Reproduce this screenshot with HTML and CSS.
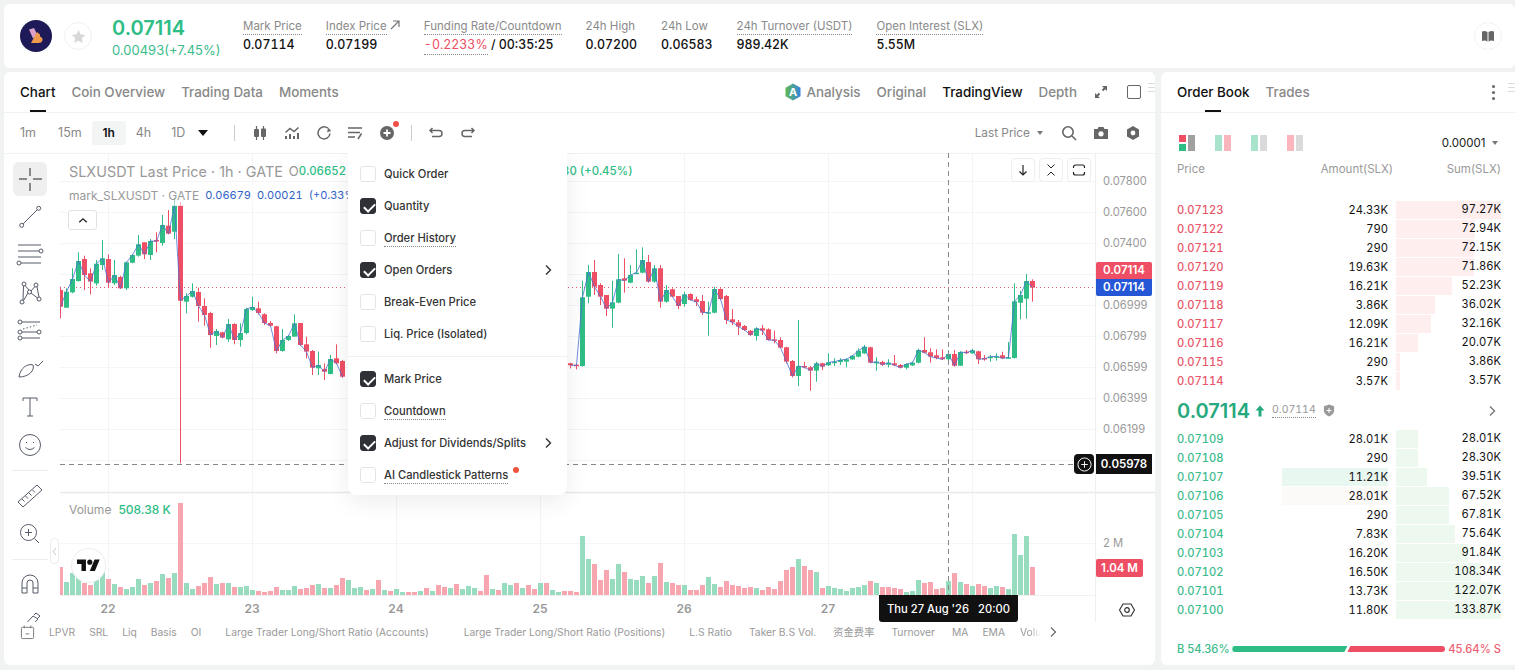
FILE: index.html
```html
<!DOCTYPE html>
<html>

<head>
    <meta charset="utf-8">
    <title>SLXUSDT</title>
    <link rel="stylesheet" href="styles.css">
</head>

<body>
    <header class="ticker">
        <svg class="coinLogo" viewBox="0 0 32 32">
            <circle cx="16" cy="16" r="16" fill="#1d1a57" />
            <path d="M9 9.500L14 8L17.500 15L13 18.500Z" fill="#d9a0c8" />
            <path d="M11 23L17 12L20 14.500L20 16.500Q23 17.500 22.500 20.500Q21.500 23 18.500 23Z" fill="#f09a4e" />
        </svg>
        <div class="starBtn">
            <svg viewBox="0 0 16 16" width="15" height="15">
                <path d="M8 1l2.2 4.6 5 .7-3.6 3.5.9 5L8 12.4l-4.5 2.4.9-5L.8 6.300l5-.7z" fill="#d8d8d8" />
            </svg>
        </div>
        <div class="lastPrice">
            <div class="lastValue">0.07114</div>
            <div class="lastChange">0.00493(+7.45%)</div>
        </div>
        <div class="stats">
            <div class="stat">
                <div class="statLabel"><span class="dotted">Mark Price</span></div>
                <div class="statValue">0.07114</div>
            </div>
            <div class="stat">
                <div class="statLabel"><span class="dotted">Index Price</span>
                    <svg viewBox="0 0 10 10" width="10" height="10">
                        <path d="M1 9L9 1M3 1h6v6" fill="none" stroke="#777" stroke-width="1.2" />
                    </svg>
                </div>
                <div class="statValue">0.07199</div>
            </div>
            <div class="stat">
                <div class="statLabel"><span class="dotted">Funding Rate/Countdown</span></div>
                <div class="statValue"><span class="fundingRate dotted">-0.2233%</span> / 00:35:25</div>
            </div>
            <div class="stat">
                <div class="statLabel">24h High</div>
                <div class="statValue">0.07200</div>
            </div>
            <div class="stat">
                <div class="statLabel">24h Low</div>
                <div class="statValue">0.06583</div>
            </div>
            <div class="stat">
                <div class="statLabel"><span class="dotted">24h Turnover (USDT)</span></div>
                <div class="statValue">989.42K</div>
            </div>
            <div class="stat">
                <div class="statLabel"><span class="dotted">Open Interest (SLX)</span></div>
                <div class="statValue">5.55M</div>
            </div>
        </div>
        <div class="bookBtn">
            <svg viewBox="0 0 14 14" width="14" height="14">
                <path d="M1 2.500Q4 1.500 6.500 3V12.500Q4 11 1 12zM13 2.500Q10 1.500 7.500 3V12.500Q10 11 13 12z" fill="#666" />
            </svg>
        </div>
    </header>

    <main class="workspace">
        <section class="chartCard">
            <div class="tabBar">
                <div class="tab tabActive">Chart</div>
                <div class="tab">Coin Overview</div>
                <div class="tab">Trading Data</div>
                <div class="tab">Moments</div>
                <div class="viewTabs">
                    <svg class="aiIcon" viewBox="0 0 18 18" width="18" height="18">
                        <defs>
                            <linearGradient id="aiGrad" x1="0" x2="1" y1="0" y2="0">
                                <stop offset="0" stop-color="#63b94f" />
                                <stop offset="1" stop-color="#3585e0" />
                            </linearGradient>
                        </defs>
                        <path d="M9 0.500L16.500 4.700V13.300L9 17.500 1.500 13.300V4.700z" fill="url(#aiGrad)" />
                        <text x="9" y="13" class="aiLetter">A</text>
                    </svg>
                    <div class="viewTab analysisTab">Analysis</div>
                    <div class="viewTab">Original</div>
                    <div class="viewTab viewTabActive">TradingView</div>
                    <div class="viewTab">Depth</div>
                    <svg class="expandIcon" viewBox="0 0 14 14" width="14" height="14">
                        <path d="M8 1h5v5l-1.800-1.800-2 2-1.400-1.400 2-2zM6 13H1V8l1.800 1.800 2-2 1.400 1.400-2 2z" fill="#666" />
                    </svg>
                    <div class="squareIcon"></div>
                </div>
                <div class="grip"></div>
            </div>

            <div class="toolBar">
                <div class="interval intervalFirst">1m</div>
                <div class="interval">15m</div>
                <div class="interval intervalActive">1h</div>
                <div class="interval">4h</div>
                <div class="interval">1D</div>
                <div class="caret caretDark"></div>
                <div class="toolSep"></div>
                <svg class="barIcon" viewBox="0 0 16 16">
                    <path d="M4.500 1v14M11.500 1v14" stroke="#666" stroke-width="1.200" />
                    <rect x="2" y="4" width="5" height="8" rx="1" fill="#666" />
                    <rect x="9" y="3.500" width="5" height="8.500" rx="1" fill="#666" />
                </svg>
                <svg class="barIcon" viewBox="0 0 16 16">
                    <path d="M2 14v-3M6 14V9M10 14v-3M14 14V8" stroke="#666" stroke-width="2" />
                    <path d="M1.500 7.500L6 3.500 10 6.500 14.500 2.500" fill="none" stroke="#666" stroke-width="1.500" />
                </svg>
                <svg class="barIcon" viewBox="0 0 16 16">
                    <path d="M14 8.500A6 6 0 1 1 11.800 3.200" fill="none" stroke="#666" stroke-width="1.500" />
                    <path d="M11 0.500l3.200 3.500-4 1.200z" fill="#666" transform="translate(1 2)" />
                </svg>
                <svg class="barIcon" viewBox="0 0 16 16">
                    <path d="M1 3h14M1 7.500h12M1 12h7" stroke="#666" stroke-width="1.500" />
                    <path d="M14.500 8.500L11 14" stroke="#666" stroke-width="1.500" />
                </svg>
                <div class="addIndicator">
                    <svg viewBox="0 0 16 16" width="16" height="16">
                        <circle cx="8" cy="8" r="7" fill="#666" />
                        <path d="M4.500 8h7M8 4.500v7" stroke="#fff" stroke-width="1.800" />
                    </svg>
                    <span class="redDot"></span>
                </div>
                <div class="toolSep undoSep"></div>
                <svg class="barIcon undoIcon" viewBox="0 0 16 16">
                    <path d="M4.500 3L2 5.500 4.500 8M2.500 5.500H11A3 3 0 0 1 11 11.500H4" fill="none" stroke="#666" stroke-width="1.500" />
                </svg>
                <svg class="barIcon" viewBox="0 0 16 16">
                    <path d="M11.500 3L14 5.500 11.500 8M13.500 5.500H5A3 3 0 0 0 5 11.500H12" fill="none" stroke="#666" stroke-width="1.500" />
                </svg>
                <div class="toolRight">
                    <div class="priceSource">Last Price</div>
                    <div class="caret caretSmall"></div>
                    <svg class="barIcon searchIcon" viewBox="0 0 16 16">
                        <circle cx="7" cy="7" r="5.200" fill="none" stroke="#666" stroke-width="1.600" />
                        <path d="M11 11l4 4" stroke="#666" stroke-width="1.600" />
                    </svg>
                    <svg class="barIcon" viewBox="0 0 16 16">
                        <path d="M1 4h3.500l1-2h5l1 2H15v10H1z" fill="#666" />
                        <circle cx="8" cy="8.800" r="2.600" fill="#fff" />
                    </svg>
                    <svg class="barIcon" viewBox="0 0 16 16">
                        <path d="M8 1l6 3.500v7L8 15l-6-3.500v-7z" fill="#666" />
                        <circle cx="8" cy="8" r="2.400" fill="#fff" />
                    </svg>
                </div>
            </div>

            <div class="chartBody">
                <div class="drawTools">
                    <div class="drawTool drawToolActive">
                        <svg viewBox="0 0 34 34">
                            <path d="M17 6v8M17 21v8M6 17h8M20 17h9" stroke="#222" stroke-width="1" />
                        </svg>
                    </div>
                    <div class="drawTool">
                        <svg viewBox="0 0 34 34">
                            <circle cx="8.700" cy="25.300" r="2" />
                            <circle cx="25.700" cy="8.300" r="2" />
                            <path d="M10.200 23.800L24.200 9.800" />
                        </svg>
                    </div>
                    <div class="drawTool">
                        <svg viewBox="0 0 34 34">
                            <path d="M5 7h23M5 13h21M5 19h23M8 25h20" />
                            <circle cx="28" cy="13" r="2" />
                            <circle cx="6" cy="25" r="2" />
                        </svg>
                    </div>
                    <div class="drawTool">
                        <svg viewBox="0 0 34 34">
                            <circle cx="11" cy="8" r="2" />
                            <circle cx="23" cy="9" r="2" />
                            <circle cx="9" cy="26" r="2" />
                            <circle cx="26" cy="23" r="2" />
                            <circle cx="16.500" cy="16" r="2" />
                            <path d="M10 24L10.500 10M12 9.500L16 14M18 15L22 10.500M24 11L26 21M24.500 22L18 17M15 17L10.500 24.500" />
                        </svg>
                    </div>
                    <div class="drawTool">
                        <svg viewBox="0 0 34 34">
                            <circle cx="7" cy="8" r="2" />
                            <circle cx="7" cy="18" r="2" />
                            <circle cx="7" cy="24" r="2" />
                            <circle cx="26" cy="18" r="2" />
                            <path d="M9 8H27M9 18H24M9 24H27" />
                            <path d="M10 15L24 11" stroke-dasharray="1.500 2" />
                        </svg>
                    </div>
                    <div class="drawTool">
                        <svg viewBox="0 0 34 34">
                            <path d="M6 25C7 16 15 11 20 13C22 18 16 25 6 25ZM22 12L25 14L30 9" />
                        </svg>
                    </div>
                    <div class="drawTool">
                        <svg viewBox="0 0 34 34">
                            <path d="M10 11V8H24V11M17 8V26M14 26H20" />
                        </svg>
                    </div>
                    <div class="drawTool">
                        <svg viewBox="0 0 34 34">
                            <circle cx="17" cy="17" r="10.500" />
                            <path d="M12.500 19.500Q17 23.500 21.500 19.500" />
                            <path d="M13.500 14v1M20.500 14v1" />
                        </svg>
                    </div>
                    <div class="drawSep"></div>
                    <div class="drawTool">
                        <svg viewBox="0 0 34 34">
                            <path d="M5 23L24 6L29 11L10 28ZM9 20L11.500 22.500M12.500 17L15 19.500M16 14L18.500 16.500M19.500 11L22 13.500" />
                        </svg>
                    </div>
                    <div class="drawTool">
                        <svg viewBox="0 0 34 34">
                            <circle cx="15.500" cy="15.500" r="8" />
                            <path d="M21.500 21.500L26 26M12 15.500H19M15.500 12V19" />
                        </svg>
                    </div>
                    <div class="drawSep"></div>
                    <div class="drawTool">
                        <svg viewBox="0 0 34 34">
                            <path d="M9 25V15A8 8 0 0 1 25 15V25H20V15A3 3 0 0 0 14 15V25ZM9 20H14M20 20H25" />
                        </svg>
                    </div>
                    <div class="drawTool">
                        <svg viewBox="0 0 34 34">
                            <path d="M7 24L20 10L25 13L12 27ZM21 9L23 7L27 10L25 12" />
                        </svg>
                    </div>
                </div>

                <div class="chartMain">
                    <svg id="chartCanvas" class="chartCanvas" viewBox="60 153 1095 469"></svg>

                    <div class="legend legendMain">
                        <span class="legendTitle">SLXUSDT Last Price · 1h · GATE</span>
                        <span class="legendO">O</span><span class="legendUp">0.06652</span>
                        <span class="legendTail legendUp">30 (+0.45%)</span>
                    </div>
                    <div class="legend legendMark">
                        <span class="legendTitle">mark_SLXUSDT · GATE</span>
                        <span class="legendBlue">0.06679</span>
                        <span class="legendBlue">0.00021</span>
                        <span class="legendBlue">(+0.33%)</span>
                    </div>
                    <div class="collapseBtn">
                        <svg viewBox="0 0 12 8" width="10" height="7">
                            <path d="M1.500 6L6 2l4.500 4" fill="none" stroke="#222" stroke-width="1.600" />
                        </svg>
                    </div>
                    <div class="legend legendVolume">
                        <span class="legendTitle">Volume</span>
                        <span class="legendUp">508.38 K</span>
                    </div>

                    <div class="paneBtns">
                        <div class="paneBtn">
                            <svg viewBox="0 0 14 14" width="14" height="14">
                                <path d="M7 2v10M3.500 8.500L7 12l3.500-3.500" fill="none" stroke="#222" stroke-width="1.200" />
                            </svg>
                        </div>
                        <div class="paneBtn">
                            <svg viewBox="0 0 14 14" width="14" height="14">
                                <path d="M3.500 1.500L7 5l3.500-3.500M3.500 12.500L7 9l3.500 3.500" fill="none" stroke="#222" stroke-width="1" />
                            </svg>
                        </div>
                        <div class="paneBtn">
                            <svg viewBox="0 0 14 14" width="14" height="14">
                                <path d="M1.500 5V4A2 2 0 0 1 3.500 2H10.500A2 2 0 0 1 12.500 4V5M1.500 9V10A2 2 0 0 0 3.500 12H10.500A2 2 0 0 0 12.500 10V9" fill="none" stroke="#222" stroke-width="1.200" />
                            </svg>
                        </div>
                    </div>

                    <div class="collapseHandle">
                        <svg viewBox="0 0 6 10" width="5" height="9">
                            <path d="M4.500 1L1.500 5l3 4" fill="none" stroke="#bbb" stroke-width="1" />
                        </svg>
                    </div>
                    <div class="tvBadge">
                        <svg viewBox="0 0 36 28" width="23" height="18">
                            <path d="M14 22H7V11H0V4h14v18zM28 22h-8l7.500-18h8L28 22z" fill="#111" />
                            <circle cx="20" cy="8" r="4" fill="#111" />
                        </svg>
                    </div>

                    <div class="crossAdd">
                        <svg viewBox="0 0 16 16" width="15" height="15">
                            <circle cx="8" cy="8" r="7" fill="none" stroke="#fff" stroke-width="1" />
                            <path d="M4.500 8h7M8 4.500v7" stroke="#fff" stroke-width="1" />
                        </svg>
                    </div>
                    <div class="priceTag tagAsk">0.07114</div>
                    <div class="priceTag tagMark">0.07114</div>
                    <div class="priceTag tagCross">0.05978</div>
                    <div class="priceTag tagVolume">1.04 M</div>
                    <div class="timeTag">Thu 27 Aug '26 &nbsp; 20:00</div>
                    <svg class="axisGear" viewBox="0 0 16 16" width="16" height="16">
                        <path d="M4 2h8l3.500 6-3.500 6H4L.5 8z" fill="none" stroke="#333" stroke-width="1.200" />
                        <circle cx="8" cy="8" r="2.300" fill="none" stroke="#333" stroke-width="1.200" />
                    </svg>

                    <div class="chartMenu">
                        <div class="menuRow"><span class="checkBox"></span><span>Quick Order</span></div>
                        <div class="menuRow"><span class="checkBox checked"></span><span>Quantity</span></div>
                        <div class="menuRow"><span class="checkBox"></span><span class="dotted">Order History</span></div>
                        <div class="menuRow"><span class="checkBox checked"></span><span>Open Orders</span>
                            <svg class="menuArrow" viewBox="0 0 8 12" width="8" height="12">
                                <path d="M2 1.500L6.500 6 2 10.500" fill="none" stroke="#333" stroke-width="1.400" />
                            </svg>
                        </div>
                        <div class="menuRow"><span class="checkBox"></span><span>Break-Even Price</span></div>
                        <div class="menuRow"><span class="checkBox"></span><span>Liq. Price (Isolated)</span></div>
                        <div class="menuSep"></div>
                        <div class="menuRow"><span class="checkBox checked"></span><span>Mark Price</span></div>
                        <div class="menuRow"><span class="checkBox"></span><span class="dotted">Countdown</span></div>
                        <div class="menuRow"><span class="checkBox checked"></span><span>Adjust for Dividends/Splits</span>
                            <svg class="menuArrow" viewBox="0 0 8 12" width="8" height="12">
                                <path d="M2 1.500L6.500 6 2 10.500" fill="none" stroke="#333" stroke-width="1.400" />
                            </svg>
                        </div>
                        <div class="menuRow"><span class="checkBox"></span><span class="dotted">AI Candlestick Patterns</span><span class="newDot"></span></div>
                    </div>
                </div>
            </div>

            <div class="indicatorBar">
                <svg class="calendarIcon" viewBox="0 0 16 16" width="15" height="16">
                    <path d="M2.500 3H13.500A1 1 0 0 1 14.500 4V14A1 1 0 0 1 13.500 15H2.500A1 1 0 0 1 1.500 14V4A1 1 0 0 1 2.500 3ZM4.500 1V4M11.500 1V4M6 10H10" fill="none" stroke="#777" stroke-width="1" />
                </svg>
                <div class="indicators">
                    <span>LPVR</span>
                    <span>SRL</span>
                    <span>Liq</span>
                    <span>Basis</span>
                    <span>OI</span>
                    <span class="indGapS">Large Trader Long/Short Ratio (Accounts)</span>
                    <span class="indGapL">Large Trader Long/Short Ratio (Positions)</span>
                    <span class="indGapS">L.S Ratio</span>
                    <span class="indGapT">Taker B.S Vol.</span>
                    <span class="indGapT">资金费率</span>
                    <span class="indGapT">Turnover</span>
                    <span class="indGapT">MA</span>
                    <span>EMA</span>
                    <span class="indFade">Volu</span>
                </div>
                <svg class="indMore" viewBox="0 0 8 12" width="8" height="12">
                    <path d="M2 1.500L6.500 6 2 10.500" fill="none" stroke="#666" stroke-width="1.200" />
                </svg>
            </div>
        </section>

        <aside class="bookCard">
            <div class="tabBar bookTabs">
                <div class="tab tabActive tabWide">Order Book</div>
                <div class="tab">Trades</div>
                <div class="moreDots"><i></i><i></i><i></i></div>
                <div class="grip"></div>
            </div>

            <div class="bookControls">
                <div class="layoutIcon">
                    <span class="cellStack"><b class="cRed"></b><b class="cGreen"></b></span>
                    <b class="cGray cTall"></b>
                </div>
                <div class="layoutIcon">
                    <b class="cTall cMint"></b><b class="cTall cPink"></b>
                </div>
                <div class="layoutIcon">
                    <b class="cTall cMint"></b><b class="cTall cLight"></b>
                </div>
                <div class="layoutIcon">
                    <b class="cTall cPink"></b><b class="cTall cLight"></b>
                </div>
                <div class="tickSize">0.00001</div>
                <div class="caret caretSmall"></div>
            </div>

            <div class="bookHead">
                <span>Price</span>
                <span class="headAmount">Amount(SLX)</span>
                <span class="headSum">Sum(SLX)</span>
            </div>

            <div id="asks" class="bookRows asks"></div>

            <div class="midPrice">
                <span class="midValue">0.07114</span>
                <svg viewBox="0 0 10 12" width="10" height="12">
                    <path d="M5 .5L9.500 5.500H6.500V11.500H3.500V5.500H.5z" fill="#26a97d" />
                </svg>
                <span class="midMark dotted">0.07114</span>
                <svg viewBox="0 0 12 14" width="12" height="13">
                    <path d="M6 .5L11.500 2.500V7Q11.500 11 6 13.500Q.5 11 .5 7V2.500z" fill="#999" />
                    <path d="M3.500 7h5M6 4.500v5" stroke="#fff" stroke-width="1.300" />
                </svg>
                <svg class="midArrow" viewBox="0 0 8 12" width="8" height="12">
                    <path d="M2 1.500L6.500 6 2 10.500" fill="none" stroke="#777" stroke-width="1.400" />
                </svg>
            </div>

            <div id="bids" class="bookRows bids"></div>

            <div class="ratioRow">
                <span class="ratioBuy">B 54.36%</span>
                <div class="ratioBar">
                    <div class="ratioGreen"></div>
                    <div class="ratioRed"></div>
                </div>
                <span class="ratioSell">45.64% S</span>
            </div>
        </aside>
    </main>
    <script src="chart.js"></script>
</body>

</html>
```

FILE: styles.css
```css
* {
    box-sizing: border-box;
}

html,
body {
    margin: 0;
    height: 670px;
    overflow: hidden;
}

body {
    padding: 4px 0 0 4px;
    background: #f1f3f3;
    font-family: Inter, "Noto Sans CJK SC", sans-serif;
    color: #111;
}

.dotted {
    border-bottom: 1px dotted #888;
    padding-bottom: 1px;
}

/* top ticker */
.ticker {
    display: flex;
    align-items: center;
    height: 64px;
    padding: 0 13px 0 16px;
    background: #fff;
    border-radius: 6px;
}

.coinLogo {
    width: 32px;
    height: 32px;
    margin-right: 12px;
}

.starBtn {
    display: flex;
    align-items: center;
    justify-content: center;
    width: 28px;
    height: 28px;
    margin-right: 20px;
    border: 1px solid #f2f2f2;
    border-radius: 50%;
}

.lastPrice {
    width: 131px;
    padding-top: 2px;
}

.lastValue {
    font-size: 20px;
    font-weight: 600;
    line-height: 26px;
    color: #2ebd85;
}

.lastChange {
    font-size: 13px;
    line-height: 18px;
    color: #3dbb8c;
}

.stats {
    display: flex;
    gap: 24px;
}

.statLabel {
    height: 18px;
    font-size: 11.500px;
    line-height: 17px;
    color: #8a8a8a;
    white-space: nowrap;
}

.statValue {
    font-size: 12.400px;
    font-variant-numeric: tabular-nums;
    font-weight: 500;
    line-height: 18px;
    color: #111;
    white-space: nowrap;
}

.statValue .dotted {
    padding-bottom: 2px;
}

.fundingRate {
    color: #ee4d63;
    font-weight: 400;
}

.bookBtn {
    display: flex;
    align-items: center;
    justify-content: center;
    width: 28px;
    height: 28px;
    margin-left: auto;
    border: 1px solid #f2f2f2;
    border-radius: 50%;
}

/* cards */
.workspace {
    display: flex;
    gap: 6px;
    height: 593px;
    margin-top: 4px;
}

.chartCard {
    display: flex;
    flex-direction: column;
    width: 1151px;
    background: #fff;
    border-radius: 6px;
    overflow: hidden;
}

.bookCard {
    flex: 1;
    background: #fff;
    border-radius: 6px 0 0 6px;
    overflow: hidden;
}

.tabBar {
    position: relative;
    display: flex;
    align-items: center;
    gap: 16px;
    flex: none;
    height: 41px;
    padding: 0 0 0 16px;
    border-bottom: 1px solid #f0f1f1;
}

.tab {
    position: relative;
    font-size: 13.400px;
    font-weight: 500;
    line-height: 40px;
    color: #888;
}

.tabActive {
    color: #111;
}

.tabActive::after {
    content: "";
    position: absolute;
    left: 10px;
    bottom: 0;
    width: 16px;
    height: 2px;
    background: #111;
}

.tabWide::after {
    left: 28px;
}

.viewTabs {
    display: flex;
    align-items: center;
    margin-left: auto;
    margin-right: 14px;
}

.aiLetter {
    font-size: 11px;
    font-weight: 700;
    fill: #fff;
    text-anchor: middle;
}

.viewTab {
    margin-left: 16px;
    font-size: 13.400px;
    font-weight: 500;
    color: #888;
}

.analysisTab {
    margin-left: 4px;
}

.viewTabActive {
    color: #111;
}

.expandIcon {
    margin-left: 17px;
}

.squareIcon {
    width: 14px;
    height: 14px;
    margin-left: 19px;
    border: 1.500px solid #666;
    border-radius: 2px;
}

.grip {
    position: absolute;
    right: 0;
    top: 11px;
    width: 7px;
    height: 9px;
    background: repeating-linear-gradient(#dcdcdc 0 1px, #fff 1px 4px);
}

/* interval and tool row */
.toolBar {
    display: flex;
    align-items: center;
    flex: none;
    height: 41px;
    padding: 0 14px 0 6px;
    border-bottom: 1px solid #f0f1f1;
}

.interval {
    padding: 0 10px;
    font-size: 12.500px;
    line-height: 24px;
    color: #888;
}

.intervalFirst {
    margin-right: 2px;
}

.intervalActive {
    width: 34px;
    padding: 0;
    text-align: center;
    background: #f3f4f4;
    border-radius: 3px;
    color: #111;
    font-size: 12px;
    font-weight: 600;
}

.caret {
    width: 0;
    height: 0;
    border-style: solid;
    border-color: #777 transparent transparent;
}

.caretDark {
    margin-left: 3px;
    border-width: 6px 5px 0;
    border-top-color: #111;
}

.caretSmall {
    margin-left: 6.500px;
    border-width: 4px 3.500px 0;
}

.toolSep {
    width: 1px;
    height: 16px;
    margin: 0 17px 0 26px;
    background: #ccc;
}

.barIcon {
    flex: none;
    width: 16px;
    height: 16px;
    margin-right: 15.700px;
}

.addIndicator {
    position: relative;
    width: 16px;
    height: 16px;
}

.addIndicator svg {
    display: block;
}

.redDot {
    position: absolute;
    right: -4px;
    top: -4px;
    width: 6px;
    height: 6px;
    background: #ef4f45;
    border-radius: 50%;
}

.undoSep {
    margin: 0 16px 0 16px;
}

.toolRight {
    display: flex;
    align-items: center;
    margin-left: auto;
}

.toolRight .barIcon {
    margin-right: 16px;
}

.toolRight .barIcon:last-child {
    margin-right: 0;
}

.priceSource {
    font-size: 11.800px;
    color: #888;
}

.searchIcon {
    margin-left: 18.500px;
}

/* chart area */
.chartBody {
    display: flex;
    flex: none;
    height: 469px;
    margin-top: -1px;
    overflow: hidden;
}

.drawTools {
    flex: none;
    width: 56px;
    padding: 9px 9px 0;
}

.drawTool {
    width: 34px;
    height: 34px;
    margin-bottom: 4px;
    border-radius: 6px;
}

.drawToolActive {
    background: #efefef;
}

.drawTool svg {
    display: block;
    width: 34px;
    height: 34px;
    fill: none;
    stroke: #555a68;
    stroke-width: 1;
}

.drawSep {
    width: 36px;
    height: 1px;
    margin: 8px -1px;
    background: #eceded;
}

.chartMain {
    position: relative;
    flex: 1;
}

.chartCanvas {
    position: absolute;
    left: 0;
    top: 0;
    width: 1095px;
    height: 469px;
}

.axisText {
    font-size: 11.200px;
    fill: #999;
    font-family: Inter, sans-serif;
}

.timeText {
    font-size: 12px;
    font-weight: 600;
    fill: #999;
    text-anchor: middle;
    font-family: Inter, sans-serif;
}

.legend {
    position: absolute;
    left: 9px;
    display: flex;
    align-items: center;
    white-space: nowrap;
    font-variant-numeric: tabular-nums;
}

.legendMain {
    top: 8px;
    height: 20px;
    font-size: 14.400px;
}

.legendMain .legendTitle {
    margin-right: 6px;
    font-variant-numeric: normal;
}

.legendTitle {
    color: #999;
}

.legendO {
    font-size: 13px;
    color: #999;
}

.legendMain .legendUp {
    font-size: 11.400px;
    font-weight: 500;
}

.legendUp {
    color: #2ebd85;
}

.legendMain .legendTail {
    position: absolute;
    left: 493px;
}

.legendMark {
    top: 31px;
    height: 22px;
    gap: 6px;
    font-size: 12px;
    background: rgba(255, 255, 255, 0.5);
}

.legendBlue {
    font-size: 11px;
    color: #2f62c9;
}

.legendVolume {
    top: 346px;
    height: 20px;
    gap: 7px;
    font-size: 12px;
    font-variant-numeric: normal;
}

.legendVolume .legendUp {
    font-weight: 500;
}

.collapseBtn {
    position: absolute;
    left: 8px;
    top: 57px;
    display: flex;
    align-items: center;
    justify-content: center;
    width: 29px;
    height: 20px;
    background: #fff;
    border: 1px solid #e2e2e2;
    border-radius: 3px;
}

.paneBtns {
    position: absolute;
    left: 951px;
    top: 5px;
    display: flex;
    gap: 4px;
}

.paneBtn {
    display: flex;
    align-items: center;
    justify-content: center;
    width: 24px;
    height: 24px;
    background: #fff;
    border: 1px solid #eee;
    border-radius: 4px;
}

.collapseHandle {
    position: absolute;
    left: -10px;
    top: 385px;
    display: flex;
    align-items: center;
    justify-content: center;
    width: 9px;
    height: 26px;
    background: #fff;
    border: 1px solid #eee;
    border-radius: 4px;
}

.tvBadge {
    position: absolute;
    left: 12px;
    top: 396px;
    display: flex;
    align-items: center;
    justify-content: center;
    width: 33px;
    height: 33px;
    background: #fff;
    border-radius: 50%;
    box-shadow: 0 0 0 1px #eee;
}

.crossAdd {
    position: absolute;
    left: 1014px;
    top: 301px;
    display: flex;
    align-items: center;
    justify-content: center;
    width: 20px;
    height: 20px;
    background: #111;
    border-radius: 4px;
}

.priceTag {
    position: absolute;
    left: 1036px;
    width: 56px;
    text-align: center;
    font-size: 11.500px;
    font-weight: 600;
    color: #fff;
}

.tagAsk {
    top: 109px;
    height: 17px;
    line-height: 17px;
    background: #ef4f64;
    border-radius: 2px 2px 0 0;
}

.tagMark {
    top: 126px;
    height: 17px;
    line-height: 17px;
    background: #2456d6;
    border-radius: 0 0 2px 2px;
}

.tagCross {
    top: 301px;
    height: 20px;
    line-height: 20px;
    background: #111;
}

.tagVolume {
    top: 406px;
    width: 47px;
    height: 18px;
    line-height: 18px;
    background: #ef4f64;
    border-radius: 2px;
}

.timeTag {
    position: absolute;
    left: 819px;
    top: 442px;
    width: 139px;
    height: 27px;
    background: #111;
    border-radius: 0 0 3px 3px;
    font-size: 11.200px;
    font-weight: 500;
    line-height: 28px;
    text-align: center;
    color: #fff;
}

.axisGear {
    position: absolute;
    left: 1059px;
    top: 449px;
}

/* right click style menu over the chart */
.chartMenu {
    position: absolute;
    left: 288px;
    top: 0;
    width: 219px;
    height: 342px;
    padding: 5px 12px 4px;
    background: #fff;
    border-radius: 0 0 8px 8px;
    box-shadow: 0 6px 24px rgba(0, 0, 0, 0.08);
}

.menuRow {
    display: flex;
    align-items: center;
    height: 32px;
    font-size: 11.200px;
    font-weight: 500;
    color: #333;
}

.menuRow .dotted {
    margin-top: 1px;
}

.checkBox {
    flex: none;
    width: 16px;
    height: 16px;
    margin-right: 8px;
    border: 1px solid #e4e4e4;
    border-radius: 3px;
}

.checked {
    position: relative;
    background: #2f3136;
    border-color: #2f3136;
}

.checked::after {
    content: "";
    position: absolute;
    left: 4.500px;
    top: 1.500px;
    width: 5px;
    height: 9px;
    border: solid #fff;
    border-width: 0 2px 2px 0;
    transform: rotate(45deg);
}

.menuArrow {
    margin-left: auto;
    margin-right: 3px;
}

.menuSep {
    height: 1px;
    margin: 6px -12px 6px;
    background: #f0f0f0;
}

.newDot {
    align-self: flex-start;
    width: 6px;
    height: 6px;
    margin: 8px 0 0 5px;
    background: #ef5340;
    border-radius: 50%;
}

/* indicator strip */
.indicatorBar {
    position: relative;
    display: flex;
    align-items: center;
    flex: none;
    height: 19px;
    padding-left: 16px;
}

.calendarIcon {
    flex: none;
    margin-right: 14px;
}

.indicators {
    display: flex;
    align-items: center;
    gap: 14px;
    width: 995px;
    height: 16px;
    font-size: 10.300px;
    line-height: 16px;
    color: #999;
    white-space: nowrap;
}

.indGapS {
    margin-left: 10px;
}

.indGapL {
    margin-left: 21px;
}

.indGapT {
    margin-left: 3px;
}

.indFade {
    margin-left: 1px;
    -webkit-mask-image: linear-gradient(to right, #000 50%, transparent 100%);
    mask-image: linear-gradient(to right, #000 50%, transparent 100%);
}

.indMore {
    margin-left: 5px;
}

/* order book */
.bookTabs {
    gap: 16px;
}

.moreDots {
    display: flex;
    flex-direction: column;
    gap: 3px;
    margin-left: auto;
    margin-right: 20px;
}

.moreDots i {
    width: 3px;
    height: 3px;
    background: #666;
    border-radius: 50%;
}

.bookControls {
    display: flex;
    align-items: center;
    height: 20px;
    margin-top: 20px;
    padding: 0 17px 0 18px;
}

.layoutIcon {
    display: flex;
    gap: 2px;
    margin-right: 20px;
}

.layoutIcon b {
    display: block;
    width: 7px;
    height: 7px;
}

.layoutIcon .cTall {
    height: 16px;
}

.cellStack {
    display: flex;
    flex-direction: column;
    gap: 2px;
}

.cRed {
    background: #ef4f64;
}

.cGreen {
    background: #2ebd85;
}

.cGray {
    background: #a0a0a0;
}

.cMint {
    background: #a8e4cc;
}

.cPink {
    background: #fbb5bd;
}

.cLight {
    background: #dadada;
}

.tickSize {
    margin-left: auto;
    font-size: 11.500px;
    color: #222;
}

.bookHead {
    display: flex;
    height: 16px;
    margin-top: 8px;
    padding: 0 14px 0 16px;
    font-size: 11.500px;
    line-height: 16px;
    color: #999;
}

.headAmount {
    width: 190px;
    margin-left: auto;
    text-align: right;
}

.headSum {
    width: 109px;
    text-align: right;
}

.bookRows {
    padding: 0 14px 0 16px;
}

.asks {
    margin-top: 24px;
}

.bookRow {
    display: grid;
    grid-template-columns: 105px 106px 113px;
    height: 19px;
    font-size: 11.200px;
    font-variant-numeric: tabular-nums;
    line-height: 19px;
}

.bookRow .rowPrice {
    font-weight: 500;
}

.asks .rowPrice {
    color: #e8566a;
}

.bids .rowPrice {
    color: #3dbb8c;
}

.rowAmount {
    height: 18px;
    text-align: right;
    color: #111;
}

.rowHot {
    background: #e9f7f1;
}

.rowFaint {
    background: #fcf9f9;
}

.rowSum {
    position: relative;
    margin-left: 8px;
    height: 18px;
    line-height: 17px;
    text-align: right;
    color: #111;
}

.rowSum span {
    position: relative;
}

.rowBar {
    position: absolute;
    left: 0;
    top: 0;
    height: 18px;
}

.asks .rowBar {
    background: #feeeee;
}

.bids .rowBar {
    background: #edf9ef;
}

.midPrice {
    display: flex;
    align-items: center;
    gap: 5px;
    height: 39px;
    padding: 0 19px 0 16px;
}

.midValue {
    font-size: 20px;
    font-weight: 600;
    color: #26a97d;
}

.midMark {
    margin-left: 2px;
    margin-right: 2px;
    font-size: 10.500px;
    font-variant-numeric: tabular-nums;
    line-height: 13px;
    color: #999;
}

.midArrow {
    margin-left: auto;
}

.ratioRow {
    display: flex;
    align-items: center;
    justify-content: space-between;
    height: 18px;
    margin-top: 20px;
    padding: 0 14px 0 16px;
    font-size: 11.200px;
    font-weight: 500;
    white-space: nowrap;
}

.ratioBuy {
    color: #3dbb8c;
}

.ratioSell {
    color: #ef5f72;
}

.ratioBar {
    display: flex;
    gap: 0;
    flex: none;
    width: 213px;
    height: 6px;
}

.ratioGreen {
    width: 115px;
    background: #2ebd85;
    border-radius: 3px 0 0 3px;
    clip-path: polygon(0 0, 100% 0, calc(100% - 3px) 100%, 0 100%);
}

.ratioRed {
    flex: 1;
    background: #ef4f64;
    border-radius: 0 3px 3px 0;
    clip-path: polygon(3px 0, 100% 0, 100% 100%, 0 100%);
}
```

FILE: chart.js
```js
// candles read off the chart: [colour, body top, body bottom, wick top, wick bottom]
var GREEN = '#2ebd85';
var RED = '#ef4f64';

var leftCandles = [
    ['r', 405, 455, 395, 490], ['g', 410, 458, 400, 458], ['g', 372, 412, 340, 415], ['g', 318, 378, 292, 380],
    ['r', 312, 360, 302, 405], ['r', 355, 380, 340, 418], ['g', 326, 385, 315, 392], ['g', 310, 330, 255, 345],
    ['r', 312, 383, 298, 398], ['g', 360, 385, 315, 390], ['r', 366, 400, 362, 402], ['g', 322, 400, 320, 405],
    ['g', 300, 323, 298, 325], ['g', 268, 302, 240, 305], ['r', 262, 298, 262, 312], ['g', 258, 300, 252, 315],
    ['r', 255, 259, 232, 292], ['g', 210, 264, 180, 272], ['r', 212, 236, 165, 238], ['g', 152, 230, 128, 252],
    ['r', 152, 437, 142, 925], ['g', 423, 440, 415, 475], ['g', 408, 425, 385, 428], ['r', 411, 453, 398, 500],
    ['r', 453, 480, 430, 512], ['r', 474, 540, 470, 578], ['g', 528, 543, 522, 570], ['r', 532, 548, 530, 550],
    ['g', 507, 553, 492, 560], ['r', 507, 555, 505, 568], ['g', 534, 555, 505, 575], ['g', 462, 534, 458, 538],
    ['g', 456, 465, 425, 468], ['r', 460, 474, 440, 478], ['r', 478, 504, 475, 510], ['r', 504, 512, 498, 515],
    ['r', 514, 588, 512, 595], ['g', 555, 588, 522, 590], ['g', 543, 555, 540, 558], ['g', 505, 545, 478, 545],
    ['r', 504, 570, 504, 572], ['r', 568, 590, 545, 610], ['r', 588, 638, 585, 660], ['g', 630, 640, 590, 660],
    ['r', 642, 650, 625, 675], ['g', 612, 657, 600, 658], ['r', 610, 625, 568, 628], ['r', 618, 665, 615, 668]
];

var rightCandles = [
    ['r', 370, 376, 368, 385], ['r', 374, 376, 373, 388], ['g', 172, 378, 122, 380], ['g', 96, 170, 75, 190],
    ['r', 96, 140, 60, 165], ['r', 135, 170, 130, 195], ['r', 165, 206, 165, 228], ['g', 187, 206, 122, 263],
    ['g', 118, 188, 42, 190], ['r', 115, 122, 55, 158], ['g', 105, 128, 75, 130], ['g', 98, 101, 28, 102],
    ['g', 60, 98, 22, 100], ['r', 66, 125, 45, 128], ['g', 85, 125, 75, 128], ['r', 85, 185, 75, 203],
    ['g', 150, 185, 135, 188], ['r', 148, 170, 145, 172], ['r', 168, 198, 168, 208], ['g', 163, 192, 155, 200],
    ['r', 162, 180, 160, 182], ['r', 178, 186, 170, 198], ['r', 183, 218, 165, 225], ['g', 217, 220, 185, 287],
    ['g', 147, 218, 140, 220], ['r', 147, 177, 145, 180], ['r', 168, 240, 165, 252], ['r', 238, 247, 207, 255],
    ['r', 247, 260, 240, 285], ['r', 258, 270, 255, 273], ['r', 272, 285, 270, 288], ['g', 265, 288, 262, 302],
    ['r', 265, 272, 255, 285], ['r', 268, 300, 265, 302], ['r', 298, 301, 272, 310], ['r', 300, 323, 292, 325],
    ['r', 322, 365, 320, 370], ['r', 363, 408, 360, 412], ['g', 378, 408, 240, 438], ['r', 378, 382, 365, 385],
    ['r', 382, 392, 378, 452], ['g', 370, 392, 365, 425], ['r', 370, 380, 368, 390], ['g', 367, 376, 340, 378],
    ['g', 365, 368, 355, 378], ['g', 360, 366, 355, 375], ['g', 358, 365, 355, 382], ['g', 347, 358, 345, 360],
    ['g', 332, 350, 325, 352], ['g', 320, 340, 315, 342], ['r', 322, 368, 320, 370], ['g', 365, 370, 352, 392],
    ['r', 366, 374, 362, 378], ['g', 368, 374, 358, 382], ['r', 370, 376, 345, 378], ['r', 375, 383, 372, 385],
    ['g', 372, 383, 370, 388], ['g', 368, 376, 365, 378], ['g', 330, 368, 326, 370], ['r', 330, 338, 292, 340],
    ['r', 337, 350, 325, 368], ['r', 346, 354, 328, 358], ['r', 352, 358, 328, 360], ['g', 342, 358, 330, 360],
    ['r', 342, 377, 330, 380], ['g', 336, 377, 334, 378], ['r', 335, 338, 330, 342], ['g', 331, 340, 326, 342],
    ['r', 334, 358, 332, 372], ['r', 354, 356, 345, 362], ['g', 350, 354, 345, 365], ['g', 349, 352, 340, 362],
    ['r', 346, 355, 335, 357], ['g', 352, 355, 306, 357], ['g', 184, 354, 130, 356], ['g', 165, 188, 152, 238],
    ['g', 123, 176, 102, 236], ['r', 123, 143, 118, 185]
];

// volume bar heights from the first candle on, negative is a red bar
var volumes = [
    -28, 13, 22, 20, -12, -10, 15, 23, -16, 11, -8, 6, 8, 16, -10, 12, -14, 21, -17, 22,
    -92, 12, 6, -9, -12, -18, 11, -12, 12, -8, 8, 9, 5, -4, -3, -4, -8, 5, 5, 9,
    -6, -7, -10, 11, -7, 7, -10, -17, 15, 7, 8, -5, 6, -15, 5, -4, 6, 3, -3, -3,
    4, -7, 4, -10, -8, 7, -11, 6, 9, 7, -4, -20, 6, -5, 12, 10, -12, 7, -10, -6,
    12, -12, 5, 3, -4, -4, -3, 59, 36, -31, -15, -25, 16, 31, -23, 16, 15, 19, -12, 19,
    -32, 13, -12, -10, 10, -5, -5, -10, 18, 11, -8, -14, -10, -9, -7, -8, 7, -5, -8, -6,
    -14, -25, -28, 36, -29, -25, 23, -7, 9, 7, 6, 4, 7, 8, 10, -14, 12, -8, -8, -7,
    -6, 3, 4, 15, -12, -13, -6, -7, 14, -22, 13, -11, 9, -11, -9, 7, 9, -8, 6, 61,
    40, 59, -28
];

var priceTicks = [
    ['0.07800', 181], ['0.07600', 212], ['0.07400', 243], ['0.06999', 305],
    ['0.06799', 336], ['0.06599', 367], ['0.06399', 398], ['0.06199', 429]
];
var dayTicks = [['22', 108], ['23', 252], ['24', 396], ['25', 540], ['26', 684], ['27', 828]];

function hLine(x1, x2, y, color, extra) {
    return '<line x1="' + x1 + '" x2="' + x2 + '" y1="' + y + '" y2="' + y + '" stroke="' + color + '" ' + (extra || '') + '/>';
}

function vLine(x, y1, y2, color, extra) {
    return '<line x1="' + x + '" x2="' + x + '" y1="' + y1 + '" y2="' + y2 + '" stroke="' + color + '" ' + (extra || '') + '/>';
}

function drawGrid() {
    var out = '';
    for (var y = 181; y <= 460; y += 31) {
        out += hLine(60, 1095, y + 0.5, '#f5f5f5');
    }
    out += hLine(60, 1095, 543.5, '#f5f5f5');
    for (var x = 108; x <= 972; x += 144) {
        out += vLine(x + 0.5, 153, 595, '#f4f4f4');
    }
    out += hLine(60, 1155, 492.5, '#e9e9e9', 'stroke-width="1.500"');
    out += hLine(60, 1095, 595.5, '#f0f0f0');
    out += vLine(1095.5, 153, 622, '#efefef');
    return out;
}

function drawVolumes() {
    var out = '';
    for (var i = 0; i < volumes.length; i++) {
        var h = Math.abs(volumes[i]);
        out += '<rect x="' + (58 + 6 * i) + '" y="' + (595 - h) + '" width="5" height="' + h + '" fill="' + (volumes[i] < 0 ? '#f7a6b0' : '#97dcbf') + '"/>';
    }
    return out;
}

function drawCandles(list, start, base, scale) {
    var out = '';
    var line = '';
    for (var i = 0; i < list.length; i++) {
        var c = list[i];
        var x = 58 + 6 * (start + i);
        var top = base + c[1] / scale;
        var bottom = base + c[2] / scale;
        var high = base + c[3] / scale;
        var low = base + c[4] / scale;
        var color = c[0] == 'g' ? GREEN : RED;
        out += '<rect x="' + (x + 2) + '" y="' + high.toFixed(1) + '" width="1" height="' + (low - high).toFixed(1) + '" fill="' + color + '"/>';
        out += '<rect x="' + x + '" y="' + top.toFixed(1) + '" width="5" height="' + Math.max(bottom - top, 1.5).toFixed(1) + '" fill="' + color + '"/>';
        line += (x + 2.5) + ',' + (c[0] == 'g' ? top : bottom).toFixed(1) + ' ';
    }
    // mark price runs as a thin blue line through the candles
    out += '<polyline points="' + line + '" fill="none" stroke="#4a6fd4" stroke-width="0.8"/>';
    return out;
}

function drawAxes() {
    var out = '';
    for (var i = 0; i < priceTicks.length; i++) {
        out += '<text class="axisText" x="1103" y="' + (priceTicks[i][1] + 4) + '">' + priceTicks[i][0] + '</text>';
    }
    out += '<text class="axisText" x="1103" y="547">2 M</text>';
    for (var j = 0; j < dayTicks.length; j++) {
        out += '<text class="timeText" x="' + dayTicks[j][1] + '" y="613">' + dayTicks[j][0] + '</text>';
    }
    return out;
}

function drawChart() {
    var svg = document.getElementById('chartCanvas');
    var html = drawGrid();
    html += drawVolumes();
    html += hLine(60, 1095, 287.5, '#e8566a', 'stroke-dasharray="1 3"');
    html += drawCandles(leftCandles, 0, 155, 3);
    html += drawCandles(rightCandles, 85, 240, 3);
    html += hLine(60, 1075, 464.5, '#888', 'stroke-dasharray="5 4"');
    html += vLine(948.5, 153, 595, '#888', 'stroke-dasharray="5 4"');
    html += drawAxes();
    svg.innerHTML = html;
}

// order book rows: price, amount, sum
var askRows = [
    ['0.07123', '24.33K', 97.27], ['0.07122', '790', 72.94], ['0.07121', '290', 72.15], ['0.07120', '19.63K', 71.86],
    ['0.07119', '16.21K', 52.23], ['0.07118', '3.86K', 36.02], ['0.07117', '12.09K', 32.16], ['0.07116', '16.21K', 20.07],
    ['0.07115', '290', 3.86], ['0.07114', '3.57K', 3.57]
];
var bidRows = [
    ['0.07109', '28.01K', 28.01], ['0.07108', '290', 28.30], ['0.07107', '11.21K', 39.51], ['0.07106', '28.01K', 67.52],
    ['0.07105', '290', 67.81], ['0.07104', '7.83K', 75.64], ['0.07103', '16.20K', 91.84], ['0.07102', '16.50K', 108.34],
    ['0.07101', '13.73K', 122.07], ['0.07100', '11.80K', 133.87]
];

function fillBook(id, rows, maxSum) {
    var box = document.getElementById(id);
    var html = '';
    for (var i = 0; i < rows.length; i++) {
        var extra = '';
        if (rows[i][0] == '0.07107') {
            extra = ' rowHot';
        }
        if (rows[i][0] == '0.07106') {
            extra = ' rowFaint';
        }
        html += '<div class="bookRow">' +
            '<div class="rowPrice">' + rows[i][0] + '</div>' +
            '<div class="rowAmount' + extra + '">' + rows[i][1] + '</div>' +
            '<div class="rowSum"><div class="rowBar" style="width:' + (rows[i][2] / maxSum * 100).toFixed(1) + '%"></div>' +
            '<span>' + rows[i][2].toFixed(2) + 'K</span></div>' +
            '</div>';
    }
    box.innerHTML = html;
}

drawChart();
fillBook('asks', askRows, 97.27);
fillBook('bids', bidRows, 133.87);
```
